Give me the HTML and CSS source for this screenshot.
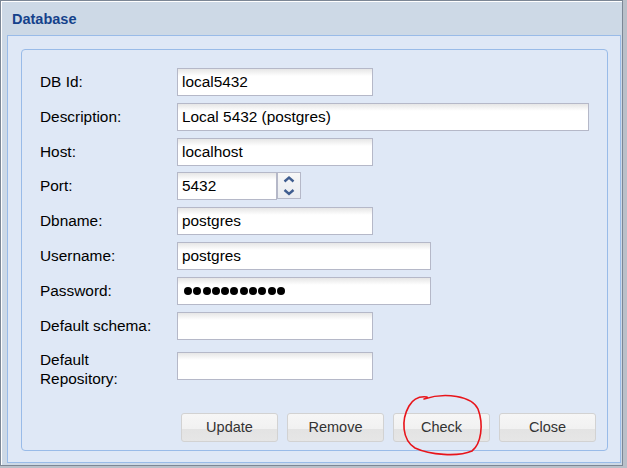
FILE: index.html
```html
<!DOCTYPE html>
<html>
<head>
<meta charset="utf-8">
<link rel="stylesheet" href="styles.css">
</head>
<body>
<div class="window">
  <div class="header"><span class="title">Database</span></div>
  <div class="body">
    <div class="fieldset">
      <div class="row"><div class="label">DB Id:</div><div class="field w196">local5432</div></div>
      <div class="row"><div class="label">Description:</div><div class="field w412">Local 5432 (postgres)</div></div>
      <div class="row"><div class="label">Host:</div><div class="field w196">localhost</div></div>
      <div class="row"><div class="label">Port:</div><div class="field w100">5432</div>
        <div class="spinner">
          <svg width="22" height="26" viewBox="0 0 22 26"><path d="M6.5 8.5 L11 4.5 L15.5 8.5" fill="none" stroke="#3f5d8f" stroke-width="2.4"/><path d="M6.5 17 L11 21 L15.5 17" fill="none" stroke="#3f5d8f" stroke-width="2.4"/></svg>
        </div>
      </div>
      <div class="row"><div class="label">Dbname:</div><div class="field w196">postgres</div></div>
      <div class="row"><div class="label">Username:</div><div class="field w254">postgres</div></div>
      <div class="row"><div class="label">Password:</div><div class="field w254 dots"><span class="dot"></span><span class="dot"></span><span class="dot"></span><span class="dot"></span><span class="dot"></span><span class="dot"></span><span class="dot"></span><span class="dot"></span><span class="dot"></span><span class="dot"></span><span class="dot"></span></div></div>
      <div class="row"><div class="label">Default schema:</div><div class="field w196"></div></div>
      <div class="row last"><div class="label two">Default<br>Repository:</div><div class="field w196"></div></div>
      <div class="buttons">
        <div class="btn">Update</div>
        <div class="btn">Remove</div>
        <div class="btn">Check</div>
        <div class="btn">Close</div>
      </div>
    </div>
  </div>
</div>
<svg class="mark" width="627" height="468" viewBox="0 0 627 468">
  <path d="M424 399 C 445 392, 472 396, 478 409 C 484 425, 481 444, 472 451 C 458 457, 430 455, 415 448 C 402 440, 401 420, 409 406 C 413 399, 419 396, 427 397" fill="none" stroke="#e8151b" stroke-width="1.6" stroke-linecap="round"/>
</svg>
</body>
</html>
```
FILE: styles.css
```css
html, body {
  margin: 0;
  padding: 0;
}
body {
  width: 627px;
  height: 468px;
  overflow: hidden;
  background: #b9c0c9;
  font-family: "Liberation Sans", Arial, sans-serif;
  position: relative;
}
.window {
  box-sizing: border-box;
  width: 623px;
  height: 466px;
  border: 1px solid #7c8795;
  box-shadow: inset 1px 1px 0 #ffffff;
  background: #cdd9e6;
  display: flex;
  flex-direction: column;
}
.header {
  height: 34px;
  flex: none;
  display: flex;
  align-items: center;
  padding-left: 11px;
}
.title {
  font-weight: bold;
  font-size: 14.5px;
  color: #15428b;
  padding-top: 1px;
}
.body {
  flex: 1;
  margin: 0 1px 2px 6px;
  border: 1px solid #99bbe8;
  background: #dfe8f6;
  padding: 13px 12px 11px 13px;
  display: flex;
}
.fieldset {
  flex: 1;
  border: 1px solid #99bbe8;
  border-radius: 4px;
  padding: 18px 11px 8px 18px;
  display: flex;
  flex-direction: column;
}
.row {
  display: flex;
  align-items: flex-start;
  height: 28px;
  margin-bottom: 6.8px;
  flex: none;
}
.row.last {
  margin-top: 6px;
}
.label {
  width: 137px;
  flex: none;
  font-size: 15.4px;
  line-height: 28px;
  color: #000;
}
.label.two {
  line-height: 19px;
  margin-top: -2px;
}
.field {
  box-sizing: border-box;
  height: 28px;
  border: 1px solid #b5b8c8;
  background: linear-gradient(#e6e6e6, #ffffff 7px);
  font-size: 15.4px;
  line-height: 26px;
  padding: 0 4px;
  color: #000;
  white-space: nowrap;
}
.w196 { width: 196px; }
.w412 { width: 412px; }
.w254 { width: 254px; }
.w100 { width: 100px; }
.dots {
  display: flex;
  align-items: center;
  gap: 1.3px;
  padding-left: 6px;
}
.dot {
  width: 8px;
  height: 8px;
  border-radius: 50%;
  background: #000;
}
.spinner {
  box-sizing: border-box;
  width: 24px;
  height: 27px;
  border: 1px solid #b5b8c8;
  background: linear-gradient(#f7f7f7, #e9ecf1);
}
.spinner svg {
  display: block;
}
.buttons {
  margin-top: auto;
  display: flex;
  justify-content: flex-end;
  gap: 9px;
}
.btn {
  box-sizing: border-box;
  width: 97px;
  height: 29px;
  border: 1px solid #d2d2d2;
  border-radius: 3px;
  background: linear-gradient(#f6f6f6 0, #f1f1f1 55%, #e3e3e3 56%, #e6e6e6 100%);
  font-size: 14.5px;
  line-height: 27px;
  text-align: center;
  color: #333;
}
.mark {
  position: absolute;
  left: 0;
  top: 0;
  pointer-events: none;
}
```
